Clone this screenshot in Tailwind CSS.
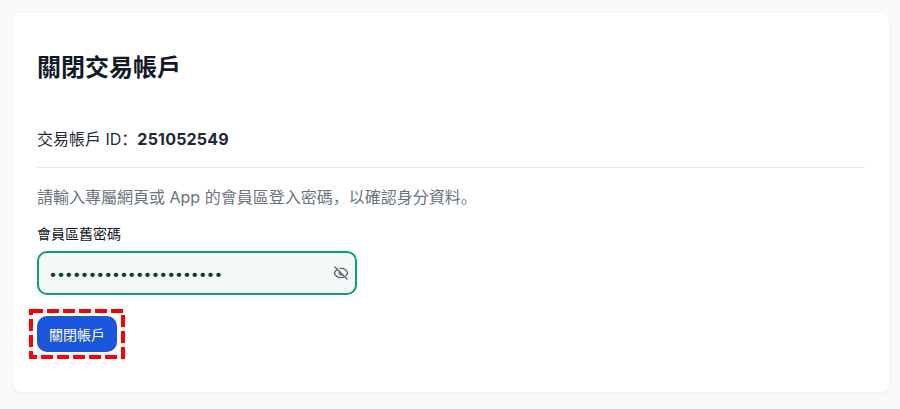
<!DOCTYPE html>
<html lang="en">
<head>
<meta charset="utf-8">
<script src="https://cdn.jsdelivr.net/npm/@tailwindcss/browser@4"></script>
</head>
<body class="bg-[#f8f9fb] font-['Inter','Noto_Sans_CJK_SC',sans-serif]">
<div class="h-[409px] w-[900px] overflow-hidden pt-[13px] pr-[11px] pl-[13px]">
  <div class="flex h-[379px] flex-col rounded-lg bg-white pt-[37px] pr-6 pl-6 shadow-[0_1px_3px_rgba(0,0,0,0.06)]">
    <h1 class="text-[24px] leading-[36px] font-bold text-[#111827]">關閉交易帳戶</h1>
    <div class="mt-[41px] border-b border-[#e5e7eb] pb-4">
      <p class="text-[16px] leading-[24px] text-[#1f2937]">交易帳戶 ID：<span class="font-bold tracking-[0.2px]">251052549</span></p>
    </div>
    <p class="mt-[17px] text-[16px] leading-[24px] text-[#6b7280]">請輸入專屬網頁或 App 的會員區登入密碼，以確認身分資料。</p>
    <label class="mt-[15px] text-[14px] leading-[20px] font-normal text-[#111827]">會員區舊密碼</label>
    <div class="relative mt-[7px] h-[44px] w-[320px] rounded-[10px] border-2 border-[#0f9d74] bg-[#f3f9f7]">
      <input type="password" value="••••••••••••••••••••••" class="h-full w-full pr-9 pl-[10px] text-[14px] text-[#0b3d3a] outline-none" readonly>
      <svg class="absolute top-[12px] right-[6px] h-4 w-4 text-[#5b6472]" viewBox="0 0 24 24" fill="none" stroke="currentColor" stroke-width="2" stroke-linecap="round" stroke-linejoin="round">
        <path d="M10.7 5.1A10.7 10.7 0 0 1 12 5c4.6 0 8.6 2.8 10 7a10.8 10.8 0 0 1-2.6 4"/>
        <path d="M6.6 6.6A10.8 10.8 0 0 0 2 12c1.4 4.2 5.4 7 10 7a10.7 10.7 0 0 0 5.4-1.6"/>
        <path d="M9.9 9.9a3 3 0 0 0 4.2 4.2"/>
        <path d="M3 3l18 18"/>
      </svg>
    </div>
    <div class="relative mt-[21px] self-start">
      <button class="h-[36px] w-[80px] rounded-[10px] bg-[#1a56db] text-[14px] font-normal text-white">關閉帳戶</button>
      <svg class="absolute top-[-7px] left-[-8px] h-[50px] w-[96px]" viewBox="0 0 96 50" fill="none">
        <rect x="2" y="2" width="92" height="46" stroke="#ff0000" stroke-width="4" stroke-dasharray="12 4"/>
      </svg>
    </div>
  </div>
</div>
</body>
</html>
